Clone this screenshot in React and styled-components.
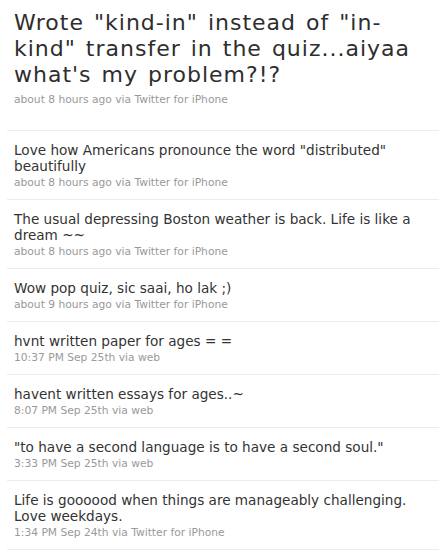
import React from "react";
import styled, { createGlobalStyle } from "styled-components";

const Global = createGlobalStyle`
  html, body { margin: 0; padding: 0; background: #fff; }
  body { font-family: "DejaVu Sans", "Lucida Grande", sans-serif; color: #333; }
`;

const Page = styled.div`
  padding-left: 7px;
  width: 432px;
`;

const Headline = styled.section`
  padding: 10px 0 22px 7px;
`;

const HeadText = styled.h1`
  margin: 0;
  font-size: 22px;
  line-height: 26px;
  font-weight: normal;
  letter-spacing: 1px;
  word-spacing: 2px;
  color: #2e2e2e;
`;

const Meta = styled.div`
  font-size: 10.7px;
  line-height: 16px;
  color: #999;
  margin-top: ${(p) => (p.$big ? "4px" : "1px")};
`;

const List = styled.ul`
  list-style: none;
  margin: 0;
  padding: 0;
  border-bottom: 1px solid #ececec;
`;

const Item = styled.li`
  border-top: 1px solid #ececec;
  padding: 11px 10px 8px 7px;
`;

const Text = styled.div`
  font-size: 13.6px;
  line-height: 16px;
  color: #333;
`;

const tweets = [
  ["Love how Americans pronounce the word \"distributed\" beautifully", "about 8 hours ago via Twitter for iPhone"],
  ["The usual depressing Boston weather is back. Life is like a dream ~~", "about 8 hours ago via Twitter for iPhone"],
  ["Wow pop quiz, sic saai, ho lak ;)", "about 9 hours ago via Twitter for iPhone"],
  ["hvnt written paper for ages = =", "10:37 PM Sep 25th via web"],
  ["havent written essays for ages..~", "8:07 PM Sep 25th via web"],
  ["\"to have a second language is to have a second soul.\"", "3:33 PM Sep 25th via web"],
  ["Life is goooood when things are manageably challenging. Love weekdays.", "1:34 PM Sep 24th via Twitter for iPhone"],
];

export default function App() {
  return (
    <Page>
      <Global />
      <Headline>
        <HeadText>Wrote "kind-in" instead of "in-kind" transfer in the quiz...aiyaa what's my problem?!?</HeadText>
        <Meta $big>about 8 hours ago via Twitter for iPhone</Meta>
      </Headline>
      <List>
        {tweets.map(([t, m], i) => (
          <Item key={i}>
            <Text>{t}</Text>
            <Meta>{m}</Meta>
          </Item>
        ))}
      </List>
    </Page>
  );
}
